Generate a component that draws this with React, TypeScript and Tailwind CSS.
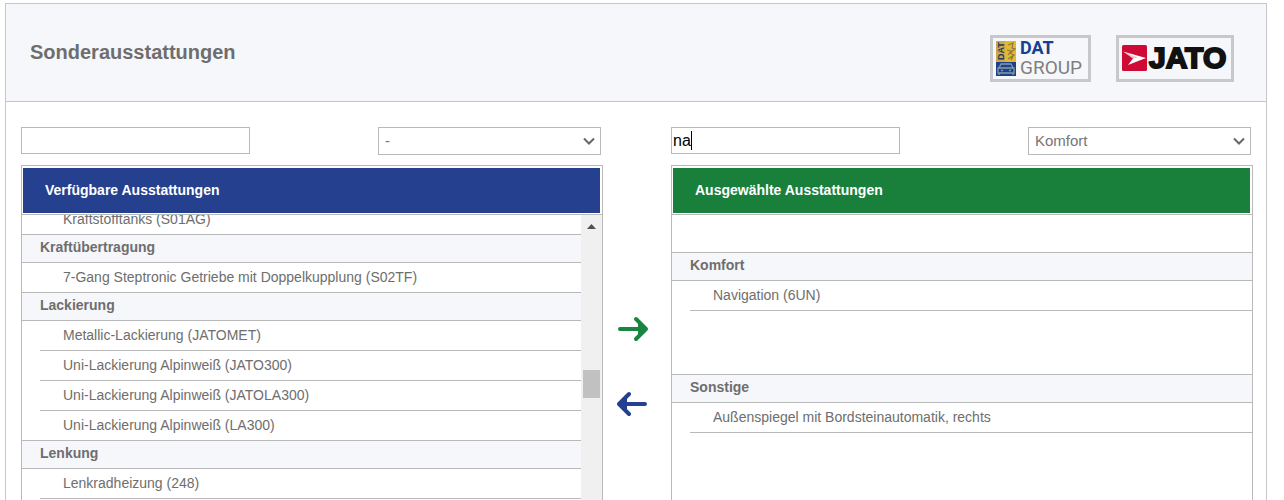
import { clsx } from "clsx";

type Group = { title?: string; items: string[]; className?: string };

const available: Group[] = [
  { items: ["Kraftstofftanks (S01AG)"] },
  { title: "Kraftübertragung", items: ["7-Gang Steptronic Getriebe mit Doppelkupplung (S02TF)"] },
  {
    title: "Lackierung",
    items: [
      "Metallic-Lackierung (JATOMET)",
      "Uni-Lackierung Alpinweiß (JATO300)",
      "Uni-Lackierung Alpinweiß (JATOLA300)",
      "Uni-Lackierung Alpinweiß (LA300)",
    ],
  },
  { title: "Lenkung", items: ["Lenkradheizung (248)"] },
];

const selected: Group[] = [
  { title: "Komfort", items: ["Navigation (6UN)"], className: "mt-[37px]" },
  { title: "Sonstige", items: ["Außenspiegel mit Bordsteinautomatik, rechts"], className: "mt-16" },
];

function DatLogo() {
  return (
    <div className="flex h-[47px] w-[101px] items-center gap-1 border-3 border-[#c8c8ca] pl-[3px]">
      <svg className="h-[35px] w-5 shrink-0 overflow-visible" viewBox="0 0 20 35" aria-hidden="true">
        <rect width="20" height="21" fill="#e3b92f" />
        <rect width="9" height="21" fill="#c9a94a" />
        <text
          transform="translate(8 19) rotate(-90)"
          fontFamily="Liberation Sans, sans-serif"
          fontSize="9"
          fontWeight="700"
          fill="#26345e"
        >
          DAT
        </text>
        <path d="M12 4l5-2-1 5 3 1-5 4 4 2-6 4M11 9l4 1-3 4M17 15l-2 4" fill="none" stroke="#8b7840" strokeWidth="1.2" />
        <rect y="21" width="20" height="14" fill="#1d4287" />
        <path d="M3 27l2-4h10l2 4M2 27h16v5H2zM5 29.500h2M13 29.500h2M3 32v2M17 32v2" fill="none" stroke="#829aae" strokeWidth="1.3" />
      </svg>
      <div className="font-[Roboto,sans-serif] leading-5">
        <div className="text-lg leading-5 font-bold text-[#183f91]">DAT</div>
        <div className="text-[19px] leading-5 text-[#808080]">GROUP</div>
      </div>
    </div>
  );
}

function JatoLogo() {
  return (
    <div className="flex h-[47px] w-[118px] items-center gap-0.5 border-3 border-[#c8c8ca] pl-[3px]">
      <svg className="h-[26px] w-[25px] shrink-0" viewBox="0 0 25 26" aria-hidden="true">
        <rect width="25" height="26" rx="1.500" fill="#cf0a35" />
        <path d="M1 6.500L24 13 6 20l5-6.500z" fill="#fff" />
        <path d="M1 6.500l10 7 5-.8z" fill="#cf0a35" opacity=".25" />
      </svg>
      <span className="font-['Liberation_Sans',sans-serif] text-[30px] leading-9 font-bold text-[#111] [-webkit-text-stroke:2px_#111]">
        JATO
      </span>
    </div>
  );
}

function Filters({ label, text, option }: { label: string; text: string; option: string }) {
  return (
    <div className="flex items-start justify-between pr-0.5">
      <div className="relative w-[229px]">
        <input
          type="text"
          aria-label={`${label} suchen`}
          defaultValue={text}
          className="block h-[27px] w-full border border-[#b9b9b9] bg-white px-px text-base text-black outline-none"
        />
        {text && <span className="absolute top-1 left-5 h-[19px] w-px bg-black" />}
      </div>
      <div className="relative w-[223px]">
        <select
          aria-label={`${label} filtern`}
          className="block h-7 w-full appearance-none border border-[#b9b9b9] bg-white pl-1.5 text-[15px] text-[#757575] outline-none"
        >
          <option>{option}</option>
        </select>
        <svg
          className="pointer-events-none absolute top-2.5 right-1.5 h-2 w-3"
          viewBox="0 0 12 8"
          fill="none"
          stroke="#666"
          strokeWidth="2"
          aria-hidden="true"
        >
          <path d="M1 1.500l5 5 5-5" />
        </svg>
      </div>
    </div>
  );
}

// Neighbouring groups overlap by one pixel so that they share a border
function GroupList({ groups }: { groups: Group[] }) {
  return (
    <div className="min-w-0 flex-1">
      {groups.map((group, i) => (
        <section key={i} className={clsx("-mb-px", group.className)}>
          {group.title && (
            <h3 className="relative flex h-[29px] items-center border-y border-[#b9b9b9] bg-[#f6f7fb] pb-1 pl-[18px] font-bold">
              {group.title}
            </h3>
          )}
          <ul className="pl-[18px]">
            {group.items.map((item) => (
              <li key={item} className="flex h-[30px] items-center border-b border-[#b9b9b9] pb-0.5 pl-[23px]">
                {item}
              </li>
            ))}
          </ul>
        </section>
      ))}
    </div>
  );
}

function Scrollbar() {
  return (
    <div className="flex w-[21px] shrink-0 flex-col items-center bg-[#f0f0f0]">
      <svg className="mt-[9px] h-[5px] w-[9px]" viewBox="0 0 9 5" aria-hidden="true">
        <path d="M4.500 0L9 5H0z" fill="#505050" />
      </svg>
      <div className="mt-[141px] h-7 w-[17px] bg-[#c1c1c1]" />
    </div>
  );
}

function Panel({ title, color, groups, scroll }: { title: string; color: string; groups: Group[]; scroll?: boolean }) {
  return (
    <div className="mt-[10px] flex min-h-0 flex-1 flex-col border border-b-0 border-[#b9b9b9]">
      <div className="border-b border-[#b9b9b9] pt-0.5 pr-0.5 pb-px pl-px">
        <h2 className={clsx("flex h-[45px] items-center pb-0.5 pl-[22px] font-bold text-white", color)}>{title}</h2>
      </div>
      <div className="flex min-h-0 flex-1 overflow-hidden">
        <div className={clsx("flex min-w-0 flex-1", scroll && "-mt-2.5")}>
          <GroupList groups={groups} />
        </div>
        {scroll && <Scrollbar />}
      </div>
    </div>
  );
}

function Arrow({ label, className, line, tip }: { label: string; className: string; line: string; tip: string }) {
  return (
    <button type="button" aria-label={label} className={className}>
      <svg
        className="h-[26px] w-8"
        viewBox="0 0 32 26"
        fill="none"
        stroke="currentColor"
        strokeWidth="4"
        strokeLinecap="round"
        strokeLinejoin="round"
      >
        <path d={line} />
        <path d={tip} fill="currentColor" stroke="none" />
      </svg>
    </button>
  );
}

export default function App() {
  return (
    <div className="flex h-screen flex-col overflow-hidden bg-white pt-[3px] pr-[17px] pl-[5px] font-['Liberation_Sans',Arial,sans-serif] text-sm text-[#6e6e6e]">
      <main className="flex min-h-0 flex-1 flex-col border border-b-0 border-[#c6c6ca]">
        <header className="flex h-[98px] shrink-0 items-center justify-between border-b border-[#c6c6ca] bg-[#f6f7fb] pt-[11px] pr-8 pl-6">
          <h1 className="pb-3 text-xl font-bold">Sonderausstattungen</h1>
          <div className="flex gap-[25px]">
            <DatLogo />
            <JatoLogo />
          </div>
        </header>
        <div className="grid min-h-0 flex-1 grid-cols-[1fr_68px_1fr] grid-rows-1 pt-[25px] pr-[13px] pl-[15px]">
          <div className="flex min-h-0 min-w-0 flex-col">
            <Filters label="Verfügbare Ausstattungen" text="" option="-" />
            <Panel title="Verfügbare Ausstattungen" color="bg-[#25408f]" groups={available} scroll />
          </div>
          <div className="flex flex-col items-start gap-[49px] pt-[189px] pl-3.5">
            <Arrow
              label="Hinzufügen"
              className="flex text-[#188641]"
              line="M3 13h25M19 3l10 10-10 10"
              tip="M21 6l8 7-8 7z"
            />
            <Arrow
              label="Entfernen"
              className="flex text-[#25408f]"
              line="M28 13H3M12 3L2 13l10 10"
              tip="M10 6l-8 7 8 7z"
            />
          </div>
          <div className="flex min-h-0 min-w-0 flex-col">
            <Filters label="Ausgewählte Ausstattungen" text="na" option="Komfort" />
            <Panel title="Ausgewählte Ausstattungen" color="bg-[#18803b]" groups={selected} />
          </div>
        </div>
      </main>
    </div>
  );
}
